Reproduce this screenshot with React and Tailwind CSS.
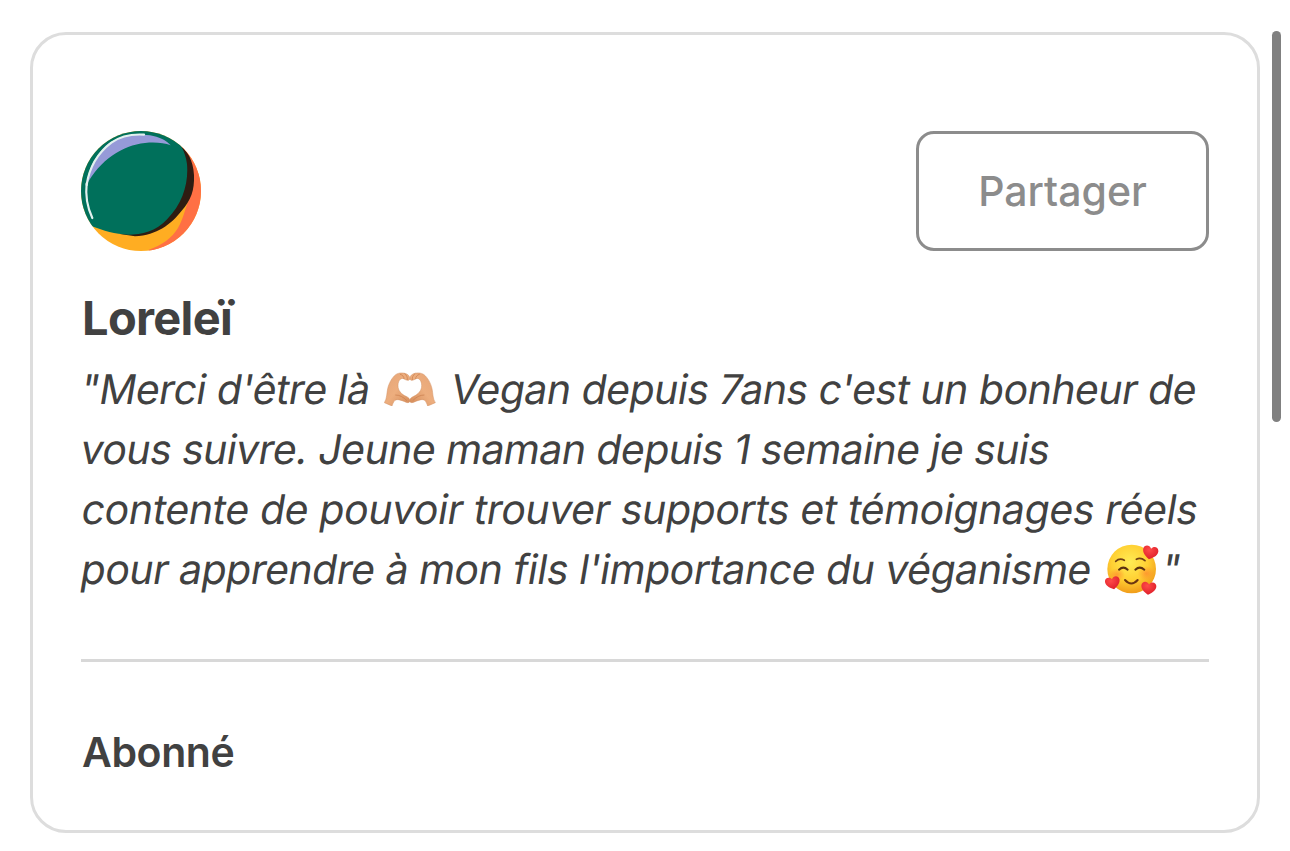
function Avatar() {
  return (
    <svg className="block size-[120px]" viewBox="33 33 360 360" aria-hidden="true">
      <defs>
        <clipPath id="disc"><circle cx="213" cy="213" r="180" /></clipPath>
      </defs>
      <g clipPath="url(#disc)">
        <rect x="33" y="33" width="360" height="360" fill="#ffad22" />
        <path d="M335 70L358 235C346 262 342 292 324 324C306 354 276 376 235 390L245 400H430V70Z" fill="#ff7044" />
        <path d="M325 72C352 90 370 122 372 165C374 212 362 242 335 272C302 314 262 344 195 349L150 342L330 110Z" fill="#2f1c12" />
        <path d="M20 20H300C322 62 346 88 351 132C356 190 338 250 292 297C258 334 215 344 175 344C135 343 100 332 66 319L20 310Z" fill="#00705b" />
        <path d="M48 197C55 150 75 105 112 73C150 44 205 38 250 48C276 54 290 63 302 76C282 69 257 66 225 69C157 76 91 119 48 197Z" fill="#969ad8" />
        <path d="M50 195C57 147 82 100 124 68C155 46 190 42 222 44" fill="none" stroke="#e2f1ee" strokeWidth="6.5" strokeLinecap="round" />
        <path d="M50 190C46 225 51 260 67 294" fill="none" stroke="#e2f1ee" strokeWidth="6.5" strokeLinecap="round" />
      </g>
    </svg>
  );
}

function HeartHands() {
  const hand =
    "M27 128C35 116 34 100 37 86C41 68 51 52 61 44C70 37 86 38 94 42C101 45 104 51 103 58C101 63 94 61 88 58C78 50 68 61 68 76C67 92 80 104 92 109C99 112 105 117 104 124C102 130 94 128 88 125C78 121 66 116 59 121C54 126 52 133 50 138Z";
  const folds = "M75 43C82 45 86 50 86 56M88 41C94 45 97 52 96 59M61 105C73 105 84 111 94 121";
  return (
    <svg className="block h-[34px] w-[52px] shrink-0" viewBox="26 36 156 102" role="img" aria-label="Mains en cœur">
      <defs>
        <linearGradient id="skin" x1="0" y1="0" x2="1" y2="1">
          <stop offset="0" stopColor="#e5a477" />
          <stop offset="0.5" stopColor="#edae7e" />
          <stop offset="1" stopColor="#d38a58" />
        </linearGradient>
      </defs>
      <g>
        <path d={hand} fill="url(#skin)" stroke="#d39162" strokeWidth="1.5" />
        <path d={folds} fill="none" stroke="#c77b4b" strokeWidth="2" strokeLinecap="round" />
      </g>
      <g transform="translate(207 0) scale(-1 1)">
        <path d={hand} fill="url(#skin)" stroke="#d39162" strokeWidth="1.5" />
        <path d={folds} fill="none" stroke="#c77b4b" strokeWidth="2" strokeLinecap="round" />
      </g>
    </svg>
  );
}

function LovingFace() {
  const heart = "M0 21C-9 16 -23 7 -23 -6C-23 -19 -7 -23 0 -11C7 -23 23 -19 23 -6C23 7 9 16 0 21Z";
  return (
    <svg className="mt-[2px] block h-[52px] w-[54px] shrink-0" viewBox="30 28 162 156" role="img" aria-label="Visage avec des cœurs">
      <defs>
        <radialGradient id="face" cx="0.46" cy="0.36" r="0.62">
          <stop offset="0" stopColor="#ffec55" />
          <stop offset="0.6" stopColor="#ffd033" />
          <stop offset="1" stopColor="#f2a01c" />
        </radialGradient>
        <radialGradient id="blush">
          <stop offset="0" stopColor="#ff802f" stopOpacity="0.65" />
          <stop offset="1" stopColor="#ff802f" stopOpacity="0" />
        </radialGradient>
        <radialGradient id="heart" cx="0.4" cy="0.3" r="0.75">
          <stop offset="0" stopColor="#ff4a48" />
          <stop offset="1" stopColor="#dc1c28" />
        </radialGradient>
      </defs>
      <circle cx="110" cy="103" r="73" fill="url(#face)" />
      <ellipse cx="66" cy="120" rx="24" ry="20" fill="url(#blush)" />
      <ellipse cx="154" cy="116" rx="26" ry="22" fill="url(#blush)" />
      <path d="M62 80Q74 69 88 77M124 74Q137 67 150 78" fill="none" stroke="#704015" strokeWidth="5" strokeLinecap="round" />
      <path d="M72 105Q85 93 98 105M121 105Q134 93 148 105" fill="none" stroke="#5b3210" strokeWidth="6" strokeLinecap="round" />
      <path d="M90 136Q109 157 128 136" fill="none" stroke="#6b3510" strokeWidth="6" strokeLinecap="round" />
      <g fill="url(#heart)">
        <path d={heart} transform="translate(166 53) rotate(12)" />
        <path d={heart} transform="translate(53 144) rotate(-12) scale(.96)" />
        <path d={heart} transform="translate(161 160) rotate(6) scale(.98)" />
      </g>
    </svg>
  );
}

function Slanted({ className, children }) {
  return <span className={`block origin-[0_44px] -skew-x-[9.5deg] ${className}`}>{children}</span>;
}

export default function App() {
  return (
    <main className="flex h-[851px] w-[1290px] items-start bg-white pt-[31px] pl-[30px] font-['Inter',sans-serif] text-[#414141]">
      <article className="mt-px flex h-[801px] w-[1230px] flex-col rounded-[36px] border-[3px] border-[#dddddd] px-12 pt-24">
        <header className="flex h-[120px] items-center justify-between">
          <Avatar />
          <button className="h-[120px] w-[293px] rounded-[18px] border-[3px] border-[#8c8c8c] pt-[2px] text-[41px] font-medium text-[#8c8c8c]">
            Partager
          </button>
        </header>
        <h1 className="mt-[37px] h-[60px] pl-px text-[47px] leading-[60px] font-bold tracking-[-0.7px]">Loreleï</h1>
        <div className="mt-[11px] -ml-[2px] text-[41px] leading-[60px] whitespace-nowrap">
          <div className="flex h-[60px] items-center">
            <Slanted className="w-[305px] shrink-0 tracking-[-0.5px]">"Merci d'être là</Slanted>
            <HeartHands />
            <Slanted className="ml-[13px] tracking-[-0.52px]">Vegan depuis 7ans c'est un bonheur de</Slanted>
          </div>
          <Slanted className="tracking-[-0.57px]">vous suivre. Jeune maman depuis 1 semaine je suis</Slanted>
          <Slanted className="pl-px tracking-[-0.39px]">contente de pouvoir trouver supports et témoignages réels</Slanted>
          <div className="flex h-[60px] items-center">
            <Slanted className="w-[1026px] shrink-0 tracking-[-0.5px]">pour apprendre à mon fils l'importance du véganisme</Slanted>
            <LovingFace />
            <Slanted className="ml-px">"</Slanted>
          </div>
        </div>
        <hr className="mt-[60px] border-t-[3px] border-[#d8d8d8]" />
        <h2 className="mt-[60px] pl-px text-[41px] leading-[60px] font-semibold tracking-[-0.4px]">Abonné</h2>
      </article>
      <div className="ml-3 h-[391px] w-[9px] rounded-full bg-[#808080]" />
    </main>
  );
}
